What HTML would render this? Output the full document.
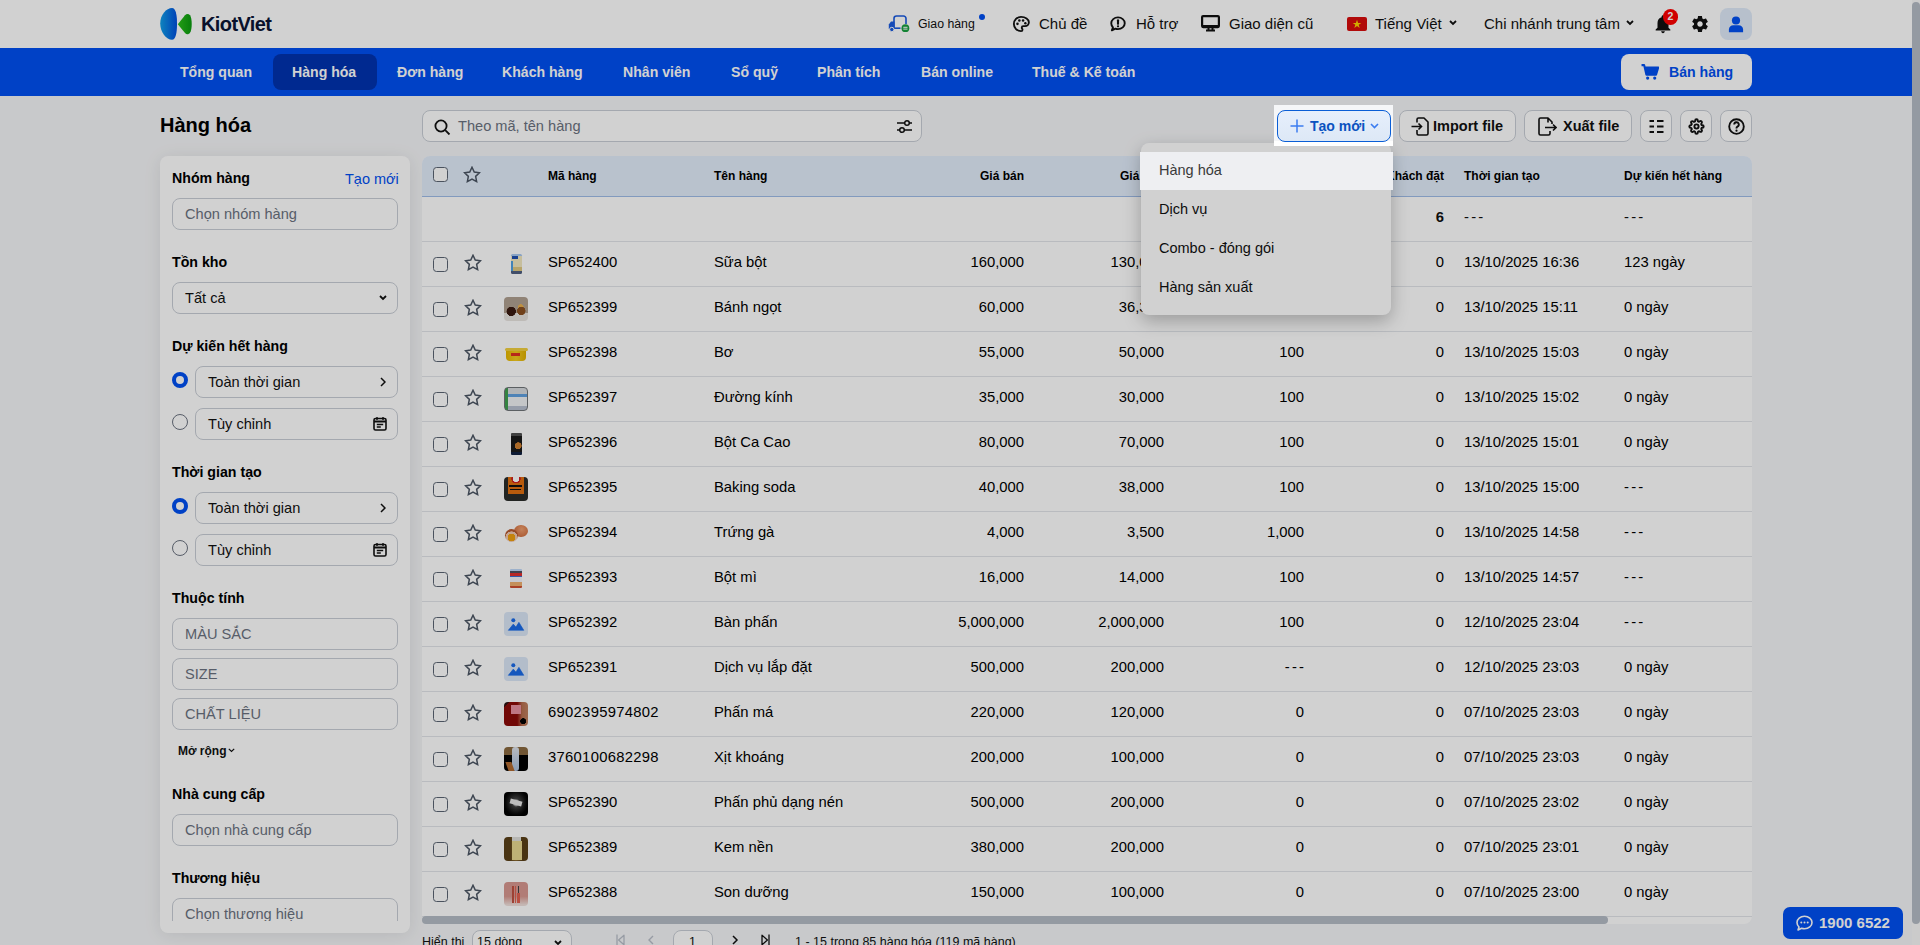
<!DOCTYPE html>
<html lang="vi">
<head>
<meta charset="utf-8">
<title>KiotViet - Hàng hóa</title>
<style>
*{box-sizing:border-box;margin:0;padding:0}
html,body{width:1920px;height:945px;overflow:hidden}
body{font-family:"Liberation Sans",sans-serif;background:#f5f6f8;color:#111;position:relative;font-size:15px}
.abs{position:absolute}
/* header */
#hdr{position:absolute;left:0;top:0;width:1912px;height:48px;background:#fff}
#nav{position:absolute;left:0;top:48px;width:1912px;height:48px;background:#0050f2}
.nv{position:absolute;top:0;height:48px;line-height:48px;color:#fff;font-weight:bold;font-size:14.1px;white-space:nowrap}
#nav .act{position:absolute;left:273px;top:6px;width:104px;height:36px;border-radius:8px;background:#0033b0}
.hi{position:absolute;top:0;height:48px;line-height:48px;font-size:15px;color:#111;white-space:nowrap}
/* vertical page scrollbar */
#vsb{position:absolute;left:1912px;top:0;width:8px;height:945px;background:#f8f8f8}
#vsb .t{position:absolute;left:0;top:2px;width:8px;height:922px;border-radius:4px;background:#b5bcc6}
/* title */
#title{position:absolute;left:160px;top:114px;font-size:20px;font-weight:bold;color:#000}
/* sidebar */
#side{position:absolute;left:160px;top:156px;width:250px;height:777px;background:#fff;border-radius:8px;overflow:hidden;box-shadow:0 2px 18px rgba(0,0,0,0.09)}
#side .inner{position:absolute;left:0;top:-1px;width:250px;height:766px;overflow:hidden}
.lbl{position:absolute;left:12px;font-size:14.2px;font-weight:bold;color:#000;white-space:nowrap}
.inp{position:absolute;left:12px;width:226px;height:32px;border:1px solid #c9ced6;border-radius:8px;font-size:14.6px;color:#6b7280;line-height:31px;padding-left:12px;white-space:nowrap}
.inp2{left:35px;width:203px;color:#111}
.radio{position:absolute;left:12px;width:16px;height:16px;border-radius:50%;border:1px solid #6b7280;background:#fff}
.radio.on{border:4px solid #0050f2}
/* search + buttons */
#search{position:absolute;left:422px;top:110px;width:500px;height:32px;border:1px solid #c9ced6;border-radius:8px;background:#fff}
#search span{position:absolute;left:35px;top:0;line-height:30px;font-size:14.6px;color:#6b7280;white-space:nowrap}
.btn{position:absolute;top:110px;height:32px;border:1px solid #c9ced6;border-radius:8px;background:#fff;font-size:14.5px;font-weight:bold;color:#111;line-height:30px;white-space:nowrap}
/* table */
#tbl{position:absolute;left:422px;top:156px;width:1330px;height:768px;background:#fff;border-radius:8px;overflow:hidden}
#thead{position:absolute;left:0;top:0;width:1330px;height:41px;background:#e2edfb;border-bottom:1px solid #9fbce8}
.th-t{position:absolute;top:0;line-height:40.5px;font-size:12px;font-weight:bold;color:#000;white-space:nowrap}
.row{position:absolute;left:422px;width:1330px;height:45px;border-bottom:1px solid #e2e5ea}
.row>span{position:absolute;top:0;line-height:40px;font-size:14.8px;color:#000;white-space:nowrap}
.cb{position:absolute;left:10.5px !important;top:15px !important;width:15px;height:15px;border:1.5px solid #5b6573;border-radius:3.5px;background:#fff;display:block}
.stw{left:42px !important;top:12px !important;line-height:0 !important}
.th{position:absolute;left:82px;top:10px;width:24px;height:24px;border-radius:4px;overflow:hidden;background:#ccc}
.th.ph{background:#dbe7f7}
.c-code{left:126px}
.c-name{left:292px}
.num{text-align:right}
.n1{right:728px}
.n2{right:588px}
.n3{right:448px}
.n4{right:308px}
.c-time{left:1042px}
.c-exp{left:1202px}
/* overlay */
#ovl{position:absolute;left:0;top:0;width:1920px;height:945px;background:rgba(0,0,0,0.18);z-index:50}
#spot{position:absolute;left:1274px;top:105px;width:119px;height:41px;background:linear-gradient(#f5f6f8 0 88%,#fff 88%);z-index:60}
#tm{position:absolute;left:1277px;top:110px;width:114px;height:32px;border:1.5px solid #0a5ed6;border-radius:8px;background:linear-gradient(#e6effc,#dde8f6);z-index:61;white-space:nowrap}
#dd{position:absolute;left:1141px;top:143px;width:250px;height:172px;border-radius:8px;background:#fff;box-shadow:0 6px 18px rgba(0,0,0,.26);z-index:40}
.ddi{position:absolute;left:18px;font-size:14.5px;color:#111;white-space:nowrap}
#ddh{position:absolute;left:1140px;top:152px;width:253px;height:38px;background:#eeeff2;z-index:61}
#ddh span{position:absolute;left:19px;top:0;line-height:37px;font-size:14.5px;color:#3a3a3a}
#phone{position:absolute;left:1783px;top:907px;width:120px;height:32px;border-radius:7px;background:#0050f2;color:#fff;font-weight:bold;font-size:15px;line-height:32px;z-index:45}
.foot{position:absolute;top:935px;font-size:12.5px;color:#111;white-space:nowrap}
</style>
</head>
<body>
<div id="hdr">
  <!-- logo -->
  <svg class="abs" style="left:160px;top:8px" width="34" height="32" viewBox="0 0 34 32">
    <defs>
      <linearGradient id="lg1" x1="0" x2="1" y1="0" y2="0"><stop offset="0" stop-color="#12a0e8"/><stop offset="1" stop-color="#0050e0"/></linearGradient>
      <linearGradient id="lg2" x1="0" x2="1" y1="0" y2="0"><stop offset="0" stop-color="#2cc01a"/><stop offset="1" stop-color="#0a9a10"/></linearGradient>
    </defs>
    <path d="M12 0C15.8 0 17 7 17 15.8S15.8 31.8 12 31.8C6.5 31.8 0.2 24.5 0.2 15.5S6.5 0 12 0z" fill="url(#lg1)"/>
    <path d="M17.8 16.2L25 7.2C26.6 5.4 28.6 5.5 30 7.3C32.3 10.5 32.3 21.5 30 24.8C28.6 26.7 26.6 26.8 25 25z" fill="url(#lg2)"/>
  </svg>
  <div class="abs" style="left:201px;top:0;line-height:48px;font-size:20px;font-weight:bold;color:#0b1536;letter-spacing:-0.6px">KiotViet</div>

  <!-- right header items -->
  <svg class="abs" style="left:888px;top:15px" width="22" height="18" viewBox="0 0 22 18"><path d="M6 13V3.5A2.5 2.5 0 0 1 8.5 1h7A2.5 2.5 0 0 1 18 3.5V9" fill="none" stroke="#1a5be0" stroke-width="1.6"/><path d="M6 13.2h6.5" stroke="#1a5be0" stroke-width="1.6"/><path d="M0.8 14V9.5L3 6.5h3.5V14z" fill="#1a5be0"/><circle cx="3.8" cy="14.5" r="2.2" fill="#1a5be0" stroke="#fff" stroke-width="1"/><circle cx="17.4" cy="13.2" r="3.9" fill="#18a040"/><path d="M15.3 12.3h4.2M15.3 14.1h4.2" stroke="#fff" stroke-width="1"/></svg>
  <div class="hi" style="left:918px;font-size:12.3px">Giao hàng</div>
  <div class="abs" style="left:978.5px;top:13.5px;width:6.5px;height:6.5px;border-radius:50%;background:#0050f2"></div>

  <svg class="abs" style="left:1012px;top:15px" width="18" height="18" viewBox="0 0 24 24"><path d="M12 2.5C6.8 2.5 2.5 6.7 2.5 12s4.3 9.5 9.5 9.5c1.3 0 2-.9 2-2 0-.5-.2-1-.5-1.3-.3-.4-.5-.8-.5-1.3 0-1.1.9-2 2-2h2.3c2.9 0 5.2-2.3 5.2-5.2C22.5 5.6 17.8 2.5 12 2.5z" fill="none" stroke="#111" stroke-width="2.5"/><circle cx="7.3" cy="11.8" r="1.7" fill="#111"/><circle cx="9.8" cy="7.3" r="1.7" fill="#111"/><circle cx="14.8" cy="7.3" r="1.7" fill="#111"/><circle cx="17.8" cy="11" r="1.6" fill="#111"/></svg>
  <div class="hi" style="left:1039px">Chủ đề</div>

  <svg class="abs" style="left:1109px;top:15px" width="18" height="18" viewBox="0 0 24 24"><path d="M12 3.2c5 0 9 3.5 9 7.8s-4 7.8-9 7.8c-1.2 0-2.4-.2-3.4-.6L3.8 20.5l1.5-4C3.9 15 3 13.1 3 11c0-4.3 4-7.8 9-7.8z" fill="none" stroke="#111" stroke-width="2.5" stroke-linejoin="round"/><path d="M12 7v4.8" stroke="#111" stroke-width="2.8" stroke-linecap="round"/><circle cx="12" cy="15" r="1.5" fill="#111"/></svg>
  <div class="hi" style="left:1136px">Hỗ trợ</div>

  <svg class="abs" style="left:1201px;top:15px" width="19" height="17" viewBox="0 0 19 17"><rect x="1.1" y="1.1" width="16.8" height="11" rx="1" fill="none" stroke="#111" stroke-width="2.2"/><rect x="1" y="10" width="17" height="2.5" fill="#111"/><path d="M7.5 12v3M11.5 12v3M5 15.6h9" stroke="#111" stroke-width="2"/></svg>
  <div class="hi" style="left:1229px">Giao diện cũ</div>

  <div class="abs" style="left:1347px;top:17px;width:20px;height:14px;border-radius:2px;background:#d80d0d"></div>
  <svg class="abs" style="left:1352px;top:19px" width="10" height="10" viewBox="0 0 10 10"><path d="M5 .8l1.1 3.1h3.2L6.7 5.8l1 3.2L5 7.1 2.3 9l1-3.2L.7 3.9h3.2z" fill="#ffd200"/></svg>
  <div class="hi" style="left:1375px">Tiếng Việt</div>
  <svg class="abs" style="left:1449px;top:20px" width="8" height="6" viewBox="0 0 8 6"><path d="M1 1l3 3 3-3" fill="none" stroke="#111" stroke-width="1.8"/></svg>

  <div class="hi" style="left:1484px">Chi nhánh trung tâm</div>
  <svg class="abs" style="left:1626px;top:20px" width="8" height="6" viewBox="0 0 8 6"><path d="M1 1l3 3 3-3" fill="none" stroke="#111" stroke-width="1.8"/></svg>

  <svg class="abs" style="left:1652px;top:13px" width="22" height="22" viewBox="0 0 24 24"><path d="M12 22c1.1 0 2-.9 2-2h-4c0 1.1.89 2 2 2zm6-6v-5c0-3.07-1.640-5.64-4.5-6.32V4c0-.83-.67-1.5-1.5-1.5s-1.5.67-1.5 1.5v.68C7.63 5.36 6 7.920 6 11v5l-2 2v1h16v-1l-2-2z" fill="#111"/></svg>
  <div class="abs" style="left:1662.7px;top:9px;width:15.5px;height:15.5px;border-radius:50%;background:#fe0000;color:#fff;font-size:10.5px;font-weight:bold;line-height:15.5px;text-align:center">2</div>

  <svg class="abs" style="left:1690px;top:14px" width="20" height="20" viewBox="0 0 24 24"><path fill-rule="evenodd" d="M19.14 12.94c.04-.3.06-.61.06-.94 0-.32-.02-.64-.07-.94l2.030-1.58c.18-.14.23-.41.12-.61l-1.92-3.32c-.12-.22-.37-.29-.59-.22l-2.39.96c-.5-.38-1.03-.7-1.62-.94l-.36-2.54c-.04-.24-.24-.41-.48-.41h-3.84c-.24 0-.43.17-.47.41l-.36 2.54c-.59.24-1.13.57-1.62.94l-2.39-.96c-.22-.08-.47 0-.59.22L2.74 8.87c-.12.21-.08.47.12.61l2.03 1.58c-.05.3-.09.63-.09.94s.02.64.07.94l-2.03 1.58c-.18.14-.23.41-.12.61l1.92 3.32c.12.22.37.29.59.22l2.39-.96c.5.38 1.03.7 1.62.94l.36 2.54c.05.24.24.41.48.41h3.84c.24 0 .44-.17.47-.41l.36-2.54c.59-.24 1.13-.56 1.62-.94l2.39.96c.22.08.47 0 .59-.22l1.92-3.32c.12-.22.07-.47-.12-.61l-2.01-1.58zM12 15.3c-1.82 0-3.3-1.48-3.3-3.3s1.48-3.3 3.3-3.3 3.3 1.48 3.3 3.3-1.48 3.3-3.3 3.3z" fill="#111"/></svg>

  <div class="abs" style="left:1720px;top:8px;width:32px;height:32px;border-radius:8px;background:#e0ebf9"></div>
  <svg class="abs" style="left:1728px;top:16px" width="16" height="17" viewBox="0 0 16 17"><circle cx="8" cy="4.5" r="4.1" fill="#0050f2"/><path d="M0.9 16.2v-2.6c0-2.4 2-4.3 4.4-4.3h5.4c2.4 0 4.4 1.9 4.4 4.3v2.6z" fill="#0050f2"/></svg>
</div>

<div id="nav">
  <div class="act"></div>
  <div class="nv" style="left:180px">Tổng quan</div>
  <div class="nv" style="left:292px">Hàng hóa</div>
  <div class="nv" style="left:397px">Đơn hàng</div>
  <div class="nv" style="left:502px">Khách hàng</div>
  <div class="nv" style="left:623px">Nhân viên</div>
  <div class="nv" style="left:731px">Sổ quỹ</div>
  <div class="nv" style="left:817px">Phân tích</div>
  <div class="nv" style="left:921px">Bán online</div>
  <div class="nv" style="left:1032px">Thuế &amp; Kế toán</div>
  <div class="abs" style="left:1621px;top:6px;width:131px;height:36px;border-radius:8px;background:#fff"></div>
  <svg class="abs" style="left:1641px;top:16px" width="18" height="16" viewBox="0 0 19 17"><path d="M0.5 1.2h2.8l2.4 10.3h10.2l2.3-7.8H4.5" fill="none" stroke="#0050f2" stroke-width="2.2" stroke-linejoin="round"/><path d="M4.3 3.7h13.9l-2.3 7.8H5.7z" fill="#0050f2"/><circle cx="7" cy="15" r="1.7" fill="#0050f2"/><circle cx="14.5" cy="15" r="1.7" fill="#0050f2"/></svg>
  <div class="nv" style="left:1669px;color:#0050f2">Bán hàng</div>
</div>

<div id="vsb"><div class="t"></div></div>

<div id="title">Hàng hóa</div>

<div id="side"><div class="inner">
  <div class="lbl" style="top:15px">Nhóm hàng</div>
  <div class="abs" style="left:185px;top:16px;font-size:14.5px;color:#0050f2">Tạo mới</div>
  <div class="inp" style="top:43px">Chọn nhóm hàng</div>

  <div class="lbl" style="top:99px">Tồn kho</div>
  <div class="inp" style="top:127px;color:#111">Tất cả</div>
  <svg class="abs" style="left:219px;top:140px" width="8" height="6" viewBox="0 0 8 6"><path d="M1 1l3 3 3-3" fill="none" stroke="#111" stroke-width="1.8"/></svg>

  <div class="lbl" style="top:183px">Dự kiến hết hàng</div>
  <div class="radio on" style="top:217px"></div>
  <div class="inp inp2" style="top:211px">Toàn thời gian</div>
  <svg class="abs" style="left:220px;top:222px" width="6" height="10" viewBox="0 0 6 10"><path d="M1 1l4 4-4 4" fill="none" stroke="#111" stroke-width="1.5"/></svg>
  <div class="radio" style="top:259px"></div>
  <div class="inp inp2" style="top:253px">Tùy chỉnh</div>
  <svg class="abs" style="left:213px;top:261px" width="14" height="15" viewBox="0 0 14 15"><rect x="1" y="2.5" width="12" height="11.5" rx="1.5" fill="none" stroke="#111" stroke-width="1.6"/><path d="M1 5.5h12" stroke="#111" stroke-width="2"/><path d="M4 1v3M10 1v3M3.8 8.5h6.4M3.8 11h4" stroke="#111" stroke-width="1.4"/></svg>

  <div class="lbl" style="top:309px">Thời gian tạo</div>
  <div class="radio on" style="top:343px"></div>
  <div class="inp inp2" style="top:337px">Toàn thời gian</div>
  <svg class="abs" style="left:220px;top:348px" width="6" height="10" viewBox="0 0 6 10"><path d="M1 1l4 4-4 4" fill="none" stroke="#111" stroke-width="1.5"/></svg>
  <div class="radio" style="top:385px"></div>
  <div class="inp inp2" style="top:379px">Tùy chỉnh</div>
  <svg class="abs" style="left:213px;top:387px" width="14" height="15" viewBox="0 0 14 15"><rect x="1" y="2.5" width="12" height="11.5" rx="1.5" fill="none" stroke="#111" stroke-width="1.6"/><path d="M1 5.5h12" stroke="#111" stroke-width="2"/><path d="M4 1v3M10 1v3M3.8 8.5h6.4M3.8 11h4" stroke="#111" stroke-width="1.4"/></svg>

  <div class="lbl" style="top:435px">Thuộc tính</div>
  <div class="inp" style="top:463px">MÀU SẮC</div>
  <div class="inp" style="top:503px">SIZE</div>
  <div class="inp" style="top:543px">CHẤT LIỆU</div>
  <div class="abs" style="left:18px;top:588.5px;font-size:12px;font-weight:bold;color:#111">Mở rộng</div>
  <svg class="abs" style="left:67.5px;top:593px" width="7" height="5" viewBox="0 0 7 5"><path d="M.8 .8l2.7 2.7L6.2 .8" fill="none" stroke="#111" stroke-width="1.2"/></svg>

  <div class="lbl" style="top:631px">Nhà cung cấp</div>
  <div class="inp" style="top:659px">Chọn nhà cung cấp</div>
  <div class="lbl" style="top:715px">Thương hiệu</div>
  <div class="inp" style="top:743px">Chọn thương hiệu</div>
</div></div>

<div id="search">
  <svg class="abs" style="left:11px;top:8px" width="17" height="16" viewBox="0 0 17 16"><circle cx="7" cy="7" r="5.6" fill="none" stroke="#111" stroke-width="1.8"/><path d="M11.2 11.2l4.3 4.3" stroke="#111" stroke-width="1.8"/></svg>
  <span>Theo mã, tên hàng</span>
  <svg class="abs" style="left:473px;top:8px" width="17" height="15" viewBox="0 0 17 15"><path d="M1 4h15M1 11h15" stroke="#111" stroke-width="1.5"/><circle cx="11" cy="4" r="2.3" fill="#fff" stroke="#111" stroke-width="1.5"/><circle cx="6" cy="11" r="2.3" fill="#fff" stroke="#111" stroke-width="1.5"/></svg>
</div>

<div class="btn" style="left:1399px;width:117px">
  <svg class="abs" style="left:11px;top:6px" width="18" height="19" viewBox="0 0 18 19"><path d="M6 5.5V2.5a1.5 1.5 0 0 1 1.5-1.5H13l4 4v11.5a1.5 1.5 0 0 1-1.5 1.5h-8A1.5 1.5 0 0 1 6 16.5V13" fill="none" stroke="#111" stroke-width="1.6" stroke-linejoin="round"/><path d="M0.5 9.5h10M7.5 6.5l3 3-3 3" fill="none" stroke="#111" stroke-width="1.6"/></svg>
  <span class="abs" style="left:33px;top:0">Import file</span>
</div>
<div class="btn" style="left:1524px;width:108px">
  <svg class="abs" style="left:12px;top:6px" width="20" height="19" viewBox="0 0 20 19"><path d="M11 5.5V1H3.5A1.5 1.5 0 0 0 2 2.5v14A1.5 1.5 0 0 0 3.5 18h8a1.5 1.5 0 0 0 1.5-1.5V14M11 1l4 4v2" fill="none" stroke="#111" stroke-width="1.6" stroke-linejoin="round"/><path d="M8 10.5h11M16 7.5l3 3-3 3" fill="none" stroke="#111" stroke-width="1.6"/></svg>
  <span class="abs" style="left:38px;top:0">Xuất file</span>
</div>
<div class="btn" style="left:1640px;width:32px">
  <svg class="abs" style="left:7px;top:8px" width="17" height="15" viewBox="0 0 17 15"><path d="M1.5 2h4.5M1.5 7.5h4.5M1.5 13h4.5M9 2h6.5M9 7.5h6.5M9 13h6.5" stroke="#111" stroke-width="2"/></svg>
</div>
<div class="btn" style="left:1680px;width:32px">
  <svg class="abs" style="left:6.5px;top:6.5px" width="17" height="17" viewBox="-1 -1 26 26"><circle cx="12" cy="12" r="3.2" fill="none" stroke="#111" stroke-width="2.9"/><path d="M19.4 15a1.65 1.65 0 0 0 .33 1.82l.06.06a2 2 0 0 1 0 2.83 2 2 0 0 1-2.830 0l-.06-.06a1.650 1.650 0 0 0-1.82-.33 1.65 1.65 0 0 0-1 1.51V21a2 2 0 0 1-2 2 2 2 0 0 1-2-2v-.09A1.65 1.65 0 0 0 9 19.4a1.65 1.65 0 0 0-1.82.33l-.06.06a2 2 0 0 1-2.83 0 2 2 0 0 1 0-2.83l.06-.06a1.65 1.65 0 0 0 .33-1.82 1.65 1.65 0 0 0-1.51-1H3a2 2 0 0 1-2-2 2 2 0 0 1 2-2h.09A1.65 1.65 0 0 0 4.6 9a1.65 1.65 0 0 0-.33-1.82l-.06-.06a2 2 0 0 1 0-2.83 2 2 0 0 1 2.83 0l.06.06a1.65 1.65 0 0 0 1.82.33H9a1.65 1.65 0 0 0 1-1.51V3a2 2 0 0 1 2-2 2 2 0 0 1 2 2v.09a1.65 1.65 0 0 0 1 1.51 1.65 1.65 0 0 0 1.82-.33l.06-.06a2 2 0 0 1 2.83 0 2 2 0 0 1 0 2.83l-.06.06a1.65 1.65 0 0 0-.33 1.82V9a1.65 1.65 0 0 0 1.51 1H21a2 2 0 0 1 2 2 2 2 0 0 1-2 2h-.09a1.65 1.65 0 0 0-1.51 1z" fill="none" stroke="#111" stroke-width="2.9" stroke-linejoin="round"/></svg>
</div>
<div class="btn" style="left:1720px;width:32px">
  <svg class="abs" style="left:7px;top:7px" width="17" height="17" viewBox="0 0 20 20"><circle cx="10" cy="10" r="8.6" fill="none" stroke="#111" stroke-width="2.2"/><path d="M7.3 7.7a2.7 2.7 0 1 1 3.9 2.4c-.8.4-1.2.9-1.2 1.8v.5" fill="none" stroke="#111" stroke-width="2.2"/><circle cx="10" cy="14.9" r="1.3" fill="#111"/></svg>
</div>

<div id="tbl">
  <div id="thead">
    <span class="cb" style="top:11px !important"></span>
    <span class="abs" style="left:41px;top:10px"><svg class="star" width="18" height="18" viewBox="0 0 18 18"><path d="M9 1.3l2.25 4.8 5.25.65-3.85 3.6.98 5.2L9 13l-4.63 2.55.98-5.2L1.5 6.75l5.25-.65z" fill="none" stroke="#4b5563" stroke-width="1.5" stroke-linejoin="miter"/></svg></span>
    <span class="th-t" style="left:126px">Mã hàng</span>
    <span class="th-t" style="left:292px">Tên hàng</span>
    <span class="th-t" style="right:728px">Giá bán</span>
    <span class="th-t" style="right:588px">Giá vốn</span>
    <span class="th-t" style="right:448px">Tồn kho</span>
    <span class="th-t" style="right:308px">Khách đặt</span>
    <span class="th-t" style="left:1042px">Thời gian tạo</span>
    <span class="th-t" style="left:1202px">Dự kiến hết hàng</span>
  </div>
  <div class="abs" style="left:0;top:41px;width:1330px;height:45px;border-bottom:1px solid #e2e5ea"></div>
  <span class="abs" style="right:308px;top:41px;line-height:40px;font-size:14.8px;font-weight:bold">6</span>
  
  <span class="abs" style="left:1042px;top:41px;line-height:40px;font-size:14.8px;letter-spacing:2.2px">---</span>
  <span class="abs" style="left:1202px;top:41px;line-height:40px;font-size:14.8px;letter-spacing:2.2px">---</span>
</div>
<div class="row" style="top:242px"><span class="cb"></span><span class="stw"><svg class="star" width="18" height="18" viewBox="0 0 18 18"><path d="M9 1.3l2.25 4.8 5.25.65-3.85 3.6.98 5.2L9 13l-4.63 2.55.98-5.2L1.5 6.75l5.25-.65z" fill="none" stroke="#4b5563" stroke-width="1.5" stroke-linejoin="miter"/></svg></span><div class="th" style="background:transparent"><div style="position:absolute;left:6.5px;top:2px;width:11px;height:20px;border-radius:1.5px;background:linear-gradient(#a8c8f0 0 8%,#f2e8c0 8% 65%,#e0c880 65% 85%,#506080 85%)"></div><div style="position:absolute;left:7.5px;top:3.5px;width:6px;height:3px;background:#2050b0"></div><div style="position:absolute;left:6.5px;top:9px;width:2.5px;height:10px;background:#50a0e0"></div></div><span class="c-code">SP652400</span><span class="c-name">Sữa bột</span><span class="num n1">160,000</span><span class="num n2">130,000</span><span class="num n3">100</span><span class="num n4">0</span><span class="c-time">13/10/2025 16:36</span><span class="c-exp">123 ngày</span></div>
<div class="row" style="top:287px"><span class="cb"></span><span class="stw"><svg class="star" width="18" height="18" viewBox="0 0 18 18"><path d="M9 1.3l2.25 4.8 5.25.65-3.85 3.6.98 5.2L9 13l-4.63 2.55.98-5.2L1.5 6.75l5.25-.65z" fill="none" stroke="#4b5563" stroke-width="1.5" stroke-linejoin="miter"/></svg></span><div class="th" style="background:radial-gradient(circle at 30% 60%,#3a1a10 0 20%,transparent 22%),radial-gradient(circle at 72% 58%,#8a5020 0 18%,transparent 20%),radial-gradient(circle at 70% 42%,#e8b050 0 12%,transparent 14%),linear-gradient(#b0a090 0 65%,#e8e4e0 65%)"></div><span class="c-code">SP652399</span><span class="c-name">Bánh ngọt</span><span class="num n1">60,000</span><span class="num n2">36,364</span><span class="num n3">100</span><span class="num n4">0</span><span class="c-time">13/10/2025 15:11</span><span class="c-exp">0 ngày</span></div>
<div class="row" style="top:332px"><span class="cb"></span><span class="stw"><svg class="star" width="18" height="18" viewBox="0 0 18 18"><path d="M9 1.3l2.25 4.8 5.25.65-3.85 3.6.98 5.2L9 13l-4.63 2.55.98-5.2L1.5 6.75l5.25-.65z" fill="none" stroke="#4b5563" stroke-width="1.5" stroke-linejoin="miter"/></svg></span><div class="th" style="background:transparent"><div style="position:absolute;left:0.5px;top:6px;width:23px;height:3px;border-radius:1.5px;background:#f2d040"></div><div style="position:absolute;left:2px;top:9px;width:20px;height:10px;border-radius:0 0 4px 4px;background:linear-gradient(90deg,#e8b800,#f5cc20 50%,#e0b000)"></div><div style="position:absolute;left:7px;top:11px;width:9px;height:3px;background:#e03020"></div></div><span class="c-code">SP652398</span><span class="c-name">Bơ</span><span class="num n1">55,000</span><span class="num n2">50,000</span><span class="num n3">100</span><span class="num n4">0</span><span class="c-time">13/10/2025 15:03</span><span class="c-exp">0 ngày</span></div>
<div class="row" style="top:377px"><span class="cb"></span><span class="stw"><svg class="star" width="18" height="18" viewBox="0 0 18 18"><path d="M9 1.3l2.25 4.8 5.25.65-3.85 3.6.98 5.2L9 13l-4.63 2.55.98-5.2L1.5 6.75l5.25-.65z" fill="none" stroke="#4b5563" stroke-width="1.5" stroke-linejoin="miter"/></svg></span><div class="th" style="background:linear-gradient(90deg,#40a050 0 14%,transparent 14%),linear-gradient(#d8dce0 0 28%,#60a0e0 28% 40%,#f0f2f4 40% 80%,#b8c0d0 80%);border:1px solid #707478"></div><span class="c-code">SP652397</span><span class="c-name">Đường kính</span><span class="num n1">35,000</span><span class="num n2">30,000</span><span class="num n3">100</span><span class="num n4">0</span><span class="c-time">13/10/2025 15:02</span><span class="c-exp">0 ngày</span></div>
<div class="row" style="top:422px"><span class="cb"></span><span class="stw"><svg class="star" width="18" height="18" viewBox="0 0 18 18"><path d="M9 1.3l2.25 4.8 5.25.65-3.85 3.6.98 5.2L9 13l-4.63 2.55.98-5.2L1.5 6.75l5.25-.65z" fill="none" stroke="#4b5563" stroke-width="1.5" stroke-linejoin="miter"/></svg></span><div class="th" style="background:transparent"><div style="position:absolute;left:6.5px;top:1px;width:11px;height:22px;border-radius:1px;background:radial-gradient(circle at 65% 58%,#d08030 0 22%,transparent 25%),linear-gradient(#505050 0 14%,#1a1a1a 14% 85%,#102040 85%)"></div></div><span class="c-code">SP652396</span><span class="c-name">Bột Ca Cao</span><span class="num n1">80,000</span><span class="num n2">70,000</span><span class="num n3">100</span><span class="num n4">0</span><span class="c-time">13/10/2025 15:01</span><span class="c-exp">0 ngày</span></div>
<div class="row" style="top:467px"><span class="cb"></span><span class="stw"><svg class="star" width="18" height="18" viewBox="0 0 18 18"><path d="M9 1.3l2.25 4.8 5.25.65-3.85 3.6.98 5.2L9 13l-4.63 2.55.98-5.2L1.5 6.75l5.25-.65z" fill="none" stroke="#4b5563" stroke-width="1.5" stroke-linejoin="miter"/></svg></span><div class="th" style="background:#2a2c2a"><div style="position:absolute;left:4px;top:0;width:16px;height:17px;background:radial-gradient(circle at 50% 10%,#fff 0 18%,#d02020 20% 26%,transparent 28%),#e07010"></div><div style="position:absolute;left:5px;top:8px;width:13px;height:2px;background:#111"></div><div style="position:absolute;left:6px;top:11.5px;width:11px;height:1.5px;background:#111"></div></div><span class="c-code">SP652395</span><span class="c-name">Baking soda</span><span class="num n1">40,000</span><span class="num n2">38,000</span><span class="num n3">100</span><span class="num n4">0</span><span class="c-time">13/10/2025 15:00</span><span class="c-exp"><span style="letter-spacing:2.2px;margin-right:-2.2px">---</span></span></div>
<div class="row" style="top:512px"><span class="cb"></span><span class="stw"><svg class="star" width="18" height="18" viewBox="0 0 18 18"><path d="M9 1.3l2.25 4.8 5.25.65-3.85 3.6.98 5.2L9 13l-4.63 2.55.98-5.2L1.5 6.75l5.25-.65z" fill="none" stroke="#4b5563" stroke-width="1.5" stroke-linejoin="miter"/></svg></span><div class="th" style="background:transparent"><div style="position:absolute;left:10px;top:3px;width:13.5px;height:12px;border-radius:50%;background:radial-gradient(circle at 55% 35%,#f0a070,#c86030)"></div><div style="position:absolute;left:0.5px;top:7px;width:13px;height:13px;border-radius:50%;background:radial-gradient(circle at 50% 65%,#f0a010 0 35%,#f0c8b0 37% 55%,#b85a30 58%)"></div></div><span class="c-code">SP652394</span><span class="c-name">Trứng gà</span><span class="num n1">4,000</span><span class="num n2">3,500</span><span class="num n3">1,000</span><span class="num n4">0</span><span class="c-time">13/10/2025 14:58</span><span class="c-exp"><span style="letter-spacing:2.2px;margin-right:-2.2px">---</span></span></div>
<div class="row" style="top:557px"><span class="cb"></span><span class="stw"><svg class="star" width="18" height="18" viewBox="0 0 18 18"><path d="M9 1.3l2.25 4.8 5.25.65-3.85 3.6.98 5.2L9 13l-4.63 2.55.98-5.2L1.5 6.75l5.25-.65z" fill="none" stroke="#4b5563" stroke-width="1.5" stroke-linejoin="miter"/></svg></span><div class="th" style="background:transparent"><div style="position:absolute;left:6px;top:2px;width:12px;height:19px;border-radius:1px;background:linear-gradient(#c0d8f8 0 12%,#505060 12% 20%,#e03030 20% 36%,#4070d0 36% 44%,#f4f4fa 44% 66%,#f0b070 66% 88%,#d05030 88%)"></div></div><span class="c-code">SP652393</span><span class="c-name">Bột mì</span><span class="num n1">16,000</span><span class="num n2">14,000</span><span class="num n3">100</span><span class="num n4">0</span><span class="c-time">13/10/2025 14:57</span><span class="c-exp"><span style="letter-spacing:2.2px;margin-right:-2.2px">---</span></span></div>
<div class="row" style="top:602px"><span class="cb"></span><span class="stw"><svg class="star" width="18" height="18" viewBox="0 0 18 18"><path d="M9 1.3l2.25 4.8 5.25.65-3.85 3.6.98 5.2L9 13l-4.63 2.55.98-5.2L1.5 6.75l5.25-.65z" fill="none" stroke="#4b5563" stroke-width="1.5" stroke-linejoin="miter"/></svg></span><div class="th ph"><svg width="24" height="24" viewBox="0 0 24 24"><circle cx="9.3" cy="8.3" r="2" fill="#1a6be8"/><path d="M4.3 18.3l5-6.2 2.6 3 3-4.8 4.9 8z" fill="#1a6be8" stroke="#1a6be8" stroke-width="0.6" stroke-linejoin="round"/></svg></div><span class="c-code">SP652392</span><span class="c-name">Bàn phấn</span><span class="num n1">5,000,000</span><span class="num n2">2,000,000</span><span class="num n3">100</span><span class="num n4">0</span><span class="c-time">12/10/2025 23:04</span><span class="c-exp"><span style="letter-spacing:2.2px;margin-right:-2.2px">---</span></span></div>
<div class="row" style="top:647px"><span class="cb"></span><span class="stw"><svg class="star" width="18" height="18" viewBox="0 0 18 18"><path d="M9 1.3l2.25 4.8 5.25.65-3.85 3.6.98 5.2L9 13l-4.63 2.55.98-5.2L1.5 6.75l5.25-.65z" fill="none" stroke="#4b5563" stroke-width="1.5" stroke-linejoin="miter"/></svg></span><div class="th ph"><svg width="24" height="24" viewBox="0 0 24 24"><circle cx="9.3" cy="8.3" r="2" fill="#1a6be8"/><path d="M4.3 18.3l5-6.2 2.6 3 3-4.8 4.9 8z" fill="#1a6be8" stroke="#1a6be8" stroke-width="0.6" stroke-linejoin="round"/></svg></div><span class="c-code">SP652391</span><span class="c-name">Dịch vụ lắp đặt</span><span class="num n1">500,000</span><span class="num n2">200,000</span><span class="num n3"><span style="letter-spacing:2.2px;margin-right:-2.2px">---</span></span><span class="num n4">0</span><span class="c-time">12/10/2025 23:03</span><span class="c-exp">0 ngày</span></div>
<div class="row" style="top:692px"><span class="cb"></span><span class="stw"><svg class="star" width="18" height="18" viewBox="0 0 18 18"><path d="M9 1.3l2.25 4.8 5.25.65-3.85 3.6.98 5.2L9 13l-4.63 2.55.98-5.2L1.5 6.75l5.25-.65z" fill="none" stroke="#4b5563" stroke-width="1.5" stroke-linejoin="miter"/></svg></span><div class="th" style="background:radial-gradient(circle at 80% 80%,#000 0 10%,transparent 12%),linear-gradient(135deg,#2a1010 0 10%,transparent 12%),linear-gradient(90deg,#8a0a08 0 55%,#b87050 75%,#c08060)"><div style="position:absolute;left:7px;top:3px;width:10px;height:9px;background:#e890a0"></div></div><span class="c-code" style="letter-spacing:0.3px">6902395974802</span><span class="c-name">Phấn má</span><span class="num n1">220,000</span><span class="num n2">120,000</span><span class="num n3">0</span><span class="num n4">0</span><span class="c-time">07/10/2025 23:03</span><span class="c-exp">0 ngày</span></div>
<div class="row" style="top:737px"><span class="cb"></span><span class="stw"><svg class="star" width="18" height="18" viewBox="0 0 18 18"><path d="M9 1.3l2.25 4.8 5.25.65-3.85 3.6.98 5.2L9 13l-4.63 2.55.98-5.2L1.5 6.75l5.25-.65z" fill="none" stroke="#4b5563" stroke-width="1.5" stroke-linejoin="miter"/></svg></span><div class="th" style="background:linear-gradient(#8a6a40 0 35%,#000 35%)"><div style="position:absolute;left:8px;top:0;width:7px;height:24px;border-radius:3px;background:linear-gradient(#e0e4ea,#a8c0e0)"></div><div style="position:absolute;left:3px;top:15px;width:6px;height:9px;background:#b06a30;transform:skewX(20deg)"></div></div><span class="c-code" style="letter-spacing:0.3px">3760100682298</span><span class="c-name">Xịt khoáng</span><span class="num n1">200,000</span><span class="num n2">100,000</span><span class="num n3">0</span><span class="num n4">0</span><span class="c-time">07/10/2025 23:03</span><span class="c-exp">0 ngày</span></div>
<div class="row" style="top:782px"><span class="cb"></span><span class="stw"><svg class="star" width="18" height="18" viewBox="0 0 18 18"><path d="M9 1.3l2.25 4.8 5.25.65-3.85 3.6.98 5.2L9 13l-4.63 2.55.98-5.2L1.5 6.75l5.25-.65z" fill="none" stroke="#4b5563" stroke-width="1.5" stroke-linejoin="miter"/></svg></span><div class="th" style="background:radial-gradient(ellipse at 50% 45%,#b0b0b0 0 14%,#404040 22%,#101010 55%,#000 70%)"><div style="position:absolute;left:6px;top:8px;width:12px;height:5px;background:#e8e8e8;transform:rotate(15deg)"></div></div><span class="c-code">SP652390</span><span class="c-name">Phấn phủ dạng nén</span><span class="num n1">500,000</span><span class="num n2">200,000</span><span class="num n3">0</span><span class="num n4">0</span><span class="c-time">07/10/2025 23:02</span><span class="c-exp">0 ngày</span></div>
<div class="row" style="top:827px"><span class="cb"></span><span class="stw"><svg class="star" width="18" height="18" viewBox="0 0 18 18"><path d="M9 1.3l2.25 4.8 5.25.65-3.85 3.6.98 5.2L9 13l-4.63 2.55.98-5.2L1.5 6.75l5.25-.65z" fill="none" stroke="#4b5563" stroke-width="1.5" stroke-linejoin="miter"/></svg></span><div class="th" style="background:linear-gradient(90deg,#5a4018 0 25%,#8a6a30 50%,#5a4018 75%)"><div style="position:absolute;left:8px;top:0;width:9px;height:4px;background:#e0e0dc"></div><div style="position:absolute;left:7.5px;top:4px;width:10px;height:19px;background:#e8d890"></div></div><span class="c-code">SP652389</span><span class="c-name">Kem nền</span><span class="num n1">380,000</span><span class="num n2">200,000</span><span class="num n3">0</span><span class="num n4">0</span><span class="c-time">07/10/2025 23:01</span><span class="c-exp">0 ngày</span></div>
<div class="row" style="top:872px"><span class="cb"></span><span class="stw"><svg class="star" width="18" height="18" viewBox="0 0 18 18"><path d="M9 1.3l2.25 4.8 5.25.65-3.85 3.6.98 5.2L9 13l-4.63 2.55.98-5.2L1.5 6.75l5.25-.65z" fill="none" stroke="#4b5563" stroke-width="1.5" stroke-linejoin="miter"/></svg></span><div class="th" style="background:linear-gradient(#d89890 0 60%,#f0e0dc 95%)"><div style="position:absolute;left:8px;top:4px;width:1.5px;height:17px;background:#c05040"></div><div style="position:absolute;left:10.5px;top:4px;width:1.5px;height:17px;background:#e06050"></div><div style="position:absolute;left:13.5px;top:4px;width:1.5px;height:8px;background:#404040"></div><div style="position:absolute;left:13px;top:11px;width:2.5px;height:10px;background:#e06050"></div></div><span class="c-code">SP652388</span><span class="c-name">Son dưỡng</span><span class="num n1">150,000</span><span class="num n2">100,000</span><span class="num n3">0</span><span class="num n4">0</span><span class="c-time">07/10/2025 23:00</span><span class="c-exp">0 ngày</span></div>
<div class="abs" style="left:422px;top:916px;width:1186px;height:8px;border-radius:4px;background:#b5bcc6"></div>

<div class="foot" style="left:422px">Hiển thị</div>
<div class="abs" style="left:472px;top:930px;width:100px;height:30px;border:1px solid #c9ced6;border-radius:8px;background:#fff"></div>
<div class="foot" style="left:477px">15 dòng</div>
<svg class="abs" style="left:554px;top:940px" width="8" height="6" viewBox="0 0 8 6"><path d="M1 1l3 3 3-3" fill="none" stroke="#111" stroke-width="1.8"/></svg>
<svg class="abs" style="left:616px;top:934px" width="9" height="12" viewBox="0 0 9 12"><path d="M1 0.5v11M8 1.2L2.6 6 8 10.8z" fill="none" stroke="#b8bec8" stroke-width="1.3" stroke-linejoin="round"/></svg>
<svg class="abs" style="left:647px;top:935px" width="7" height="10" viewBox="0 0 7 10"><path d="M6 1L2 5l4 4" fill="none" stroke="#b8bec8" stroke-width="1.4"/></svg>
<div class="abs" style="left:673px;top:930px;width:40px;height:30px;border:1px solid #c9ced6;border-radius:8px;background:#fff"></div>
<div class="foot" style="left:689px">1</div>
<svg class="abs" style="left:732px;top:935px" width="7" height="10" viewBox="0 0 7 10"><path d="M1 1l4 4-4 4" fill="none" stroke="#111" stroke-width="1.5"/></svg>
<svg class="abs" style="left:761px;top:934px" width="9" height="12" viewBox="0 0 9 12"><path d="M8 0.5v11M1 1.2L6.4 6 1 10.8z" fill="none" stroke="#111" stroke-width="1.3" stroke-linejoin="round"/></svg>
<div class="foot" style="left:795px">1 - 15 trong 85 hàng hóa (119 mã hàng)</div>

<div id="phone">
  <svg class="abs" style="left:13px;top:8px" width="17" height="16" viewBox="0 0 17 16"><path d="M8.5 1.2c4.2 0 7.5 2.8 7.5 6.3s-3.3 6.3-7.5 6.3c-1 0-2-.2-2.9-.5L2 15l1-3C1.8 10.8 1 9.2 1 7.5 1 4 4.3 1.2 8.5 1.2z" fill="none" stroke="#fff" stroke-width="1.6" stroke-linejoin="round"/><circle cx="5.3" cy="7.5" r="1" fill="#fff"/><circle cx="8.5" cy="7.5" r="1" fill="#fff"/><circle cx="11.7" cy="7.5" r="1" fill="#fff"/></svg>
  <span class="abs" style="left:36px;top:0">1900 6522</span>
</div>

<div id="dd">
  <div class="ddi" style="top:58px">Dịch vụ</div>
  <div class="ddi" style="top:97px">Combo - đóng gói</div>
  <div class="ddi" style="top:136px">Hàng sản xuất</div>
</div>

<div id="ovl"></div>

<div id="spot"></div>
<div id="tm">
  <svg class="abs" style="left:12px;top:8px" width="14" height="14" viewBox="0 0 14 14"><path d="M7 0.5v13M0.5 7h13" stroke="#3b7cf0" stroke-width="1.5"/></svg>
  <span class="abs" style="left:32px;top:0;line-height:31px;font-size:14px;font-weight:bold;color:#0a52c0">Tạo mới</span>
  <svg class="abs" style="left:92px;top:12px" width="9" height="6" viewBox="0 0 9 6"><path d="M1 1l3.5 3.5L8 1" fill="none" stroke="#3b7cf0" stroke-width="1.6"/></svg>
</div>
<div id="ddh"><span>Hàng hóa</span></div>
</body>
</html>
